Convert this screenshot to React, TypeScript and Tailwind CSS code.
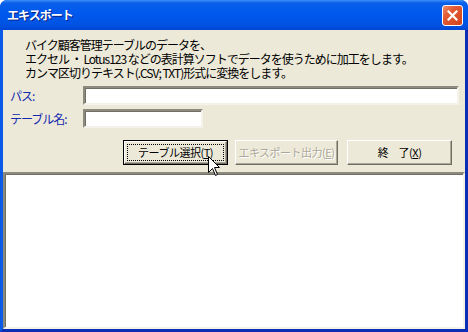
import React from "react";

const Bevel = "border border-t-white border-l-white border-b-[#716f64] border-r-[#716f64] shadow-[inset_-1px_-1px_0_#aca899]";

const Sunken = "border-2 border-t-[#8d8b80] border-l-[#8d8b80] border-b-[#f4f2ea] border-r-[#f4f2ea] shadow-[inset_1px_1px_0_#716f64]";

const App: React.FC = () => {
  return (
    <div className="relative w-[468px] h-[332px] bg-white flex flex-col font-['Noto_Sans_CJK_JP','Noto_Sans',sans-serif]">
      <div className="flex-1 flex flex-col rounded-t-[7px] overflow-hidden bg-[#0054e3]">
        {/* title bar */}
        <div className="h-[30px] flex items-center justify-between pl-[7px] pr-[5px] bg-[linear-gradient(180deg,#3d8ff9_0%,#0a5fe8_10%,#0058ee_45%,#0054e3_80%,#0046d6_100%)]">
          <span className="text-white text-[12px] font-bold tracking-[-1px] [text-shadow:1px_1px_0_#0a1f80]">
            エキスポート
          </span>
          <button className="w-[21px] h-[21px] rounded-[3px] border border-white bg-[linear-gradient(135deg,#f08a6a_0%,#e25a33_35%,#d2441c_100%)] flex items-center justify-center">
            <svg width="11" height="11" viewBox="0 0 11 11">
              <path d="M1.5 1.5 L9.5 9.5 M9.5 1.5 L1.5 9.5" stroke="white" strokeWidth="2.2" strokeLinecap="square" />
            </svg>
          </button>
        </div>

        {/* body */}
        <div className="flex-1 flex flex-col bg-[#ece9d8] border-l-[3px] border-r-[3px] border-b-[3px] border-l-[#0a5ae8] border-r-[#0a2fb5] border-b-[#0a2fb5]">
          <div className="pl-[22px] pt-[8px] text-[12px] leading-[14px] tracking-[-1px] text-black">
            <p className="h-[14px]">バイク顧客管理テーブルのデータを、</p>
            <p className="h-[14px]">エクセル ・ Lotus123 などの表計算ソフトでデータを使うために加工をします。</p>
            <p className="h-[14px]">カンマ区切りテキスト(.CSV; TXT)形式に変換をします。</p>
          </div>

          <div className="mt-[6px] flex items-center h-[19px]">
            <span className="w-[80px] pl-[7px] text-[12px] tracking-[-1px] text-[#1428b0]">パス:</span>
            <div className={`w-[376px] h-[19px] bg-white ${Sunken}`} />
          </div>
          <div className="mt-[4px] flex items-center h-[19px]">
            <span className="w-[80px] pl-[7px] text-[12px] tracking-[-1px] text-[#1428b0]">テーブル名:</span>
            <div className={`w-[120px] h-[19px] bg-white ${Sunken}`} />
          </div>

          <div className="mt-[12px] h-[25px] flex pl-[120px] text-[11px] tracking-[-0.5px]">
            <div className="w-[105px] border border-black flex">
              <div className={`flex-1 flex p-[2px] ${Bevel}`}>
                <div className="flex-1 border border-dotted border-black flex items-center justify-center text-black">
                  テーブル選択(<span className="underline">T</span>)
                </div>
              </div>
            </div>
            <div className={`ml-[7px] w-[103px] flex items-center justify-center text-[#aca899] [text-shadow:1px_1px_0_#fff] ${Bevel}`}>
              エキスポート出力(<span className="underline">E</span>)
            </div>
            <div className={`ml-[9px] w-[105px] flex items-center justify-center text-black ${Bevel}`}>
              終　了(<span className="underline">X</span>)
            </div>
          </div>

          <div className={`mt-[7px] flex-1 bg-white ${Sunken}`} />
        </div>
      </div>

      {/* mouse pointer */}
      <svg className="absolute left-[208px] top-[156px]" width="13" height="21" viewBox="0 0 13 21">
        <path d="M0.5 0.5 L0.5 16.5 L4.5 12.5 L7.5 19.5 L9.5 18.5 L6.5 11.5 L11.5 11.5 Z" fill="white" stroke="black" strokeWidth="1" />
      </svg>
    </div>
  );
};

export default App;
